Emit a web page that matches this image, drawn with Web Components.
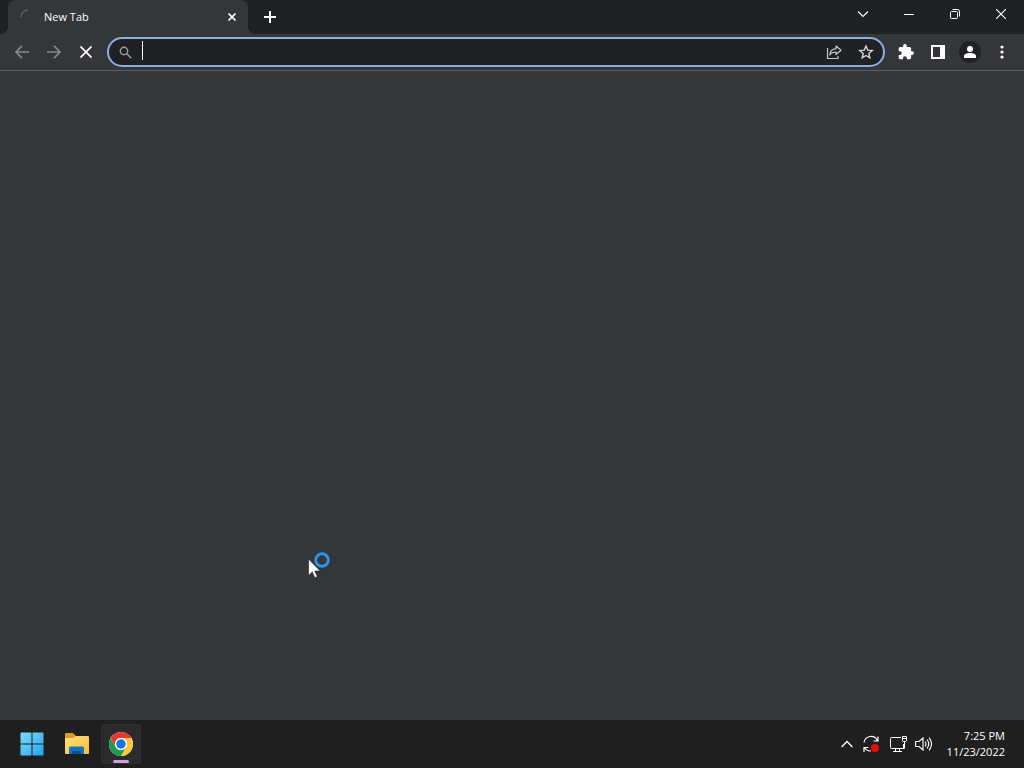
<!DOCTYPE html>
<html lang="en">
<head>
<meta charset="utf-8">
<title>New Tab</title>
<style>
html, body { height: 100%; margin: 0; }
body { background: #35363a; overflow: hidden; font: 11px/16px "Open Sans", "Noto Sans", sans-serif; color: #fff; }
</style>
</head>
<body>
<desktop-screen>
  <browser-window>
    <tab-strip slot="tabs">
      <browser-tab>New Tab</browser-tab>
    </tab-strip>
    <browser-toolbar slot="toolbar"></browser-toolbar>
  </browser-window>
  <task-bar slot="taskbar"></task-bar>
  <busy-pointer slot="pointer"></busy-pointer>
</desktop-screen>

<script>
const base = `
  *, *::before, *::after { box-sizing: border-box; }
  svg { display: block; flex: none; }
  button { all: unset; box-sizing: border-box; display: flex; align-items: center; justify-content: center; flex: none; color: inherit; }
`;

function define(name, html) {
  const template = document.createElement('template');
  template.innerHTML = html;
  customElements.define(name, class extends HTMLElement {
    constructor() {
      super();
      this.attachShadow({ mode: 'open' }).append(template.content.cloneNode(true));
    }
  });
}

define('desktop-screen', `
<style>${base}
  :host { display: flex; flex-direction: column; height: 100vh; position: relative; }
</style>
<slot></slot><slot name="taskbar"></slot><slot name="pointer"></slot>`);

define('browser-window', `
<style>${base}
  :host { display: flex; flex-direction: column; flex: 1; min-height: 0; background: #35363a; }
  main { flex: 1; }
</style>
<slot name="tabs"></slot><slot name="toolbar"></slot><main></main>`);

define('browser-tab', `
<style>${base}
  :host { display: flex; align-items: center; box-sizing: border-box; flex: 0 1 240px; height: 34px; padding: 0 8px 0 12px; gap: 8px;
    background: #35363a; border-radius: 8px 8px 0 0; position: relative; }
  :host::before, :host::after { content: ""; position: absolute; bottom: 0; width: 8px; height: 8px; }
  :host::before { right: 100%; background: radial-gradient(circle at 0 0, transparent 8px, #35363a 8px); }
  :host::after { left: 100%; background: radial-gradient(circle at 100% 0, transparent 8px, #35363a 8px); }
  span { flex: 1; }
  button { width: 16px; height: 34px; }
</style>
<svg width="16" height="16" viewBox="0 0 16 16" fill="none" stroke="#5b6067" stroke-width="1.5"><path d="M1 8a7 7 0 0 1 7-7"/></svg>
<span><slot></slot></span>
<button aria-label="Close tab"><svg width="8" height="8" viewBox="0 0 8 8" stroke="#fff" stroke-width="1.6"><path d="M.5.5l7 7M7.5.5l-7 7"/></svg></button>`);

define('tab-strip', `
<style>${base}
  :host { display: flex; height: 34px; padding-left: 8px; background: #202124; }
  .new { width: 28px; height: 34px; margin-left: 8px; }
  .controls { display: flex; margin-left: auto; }
  .controls button { width: 46px; height: 28px; }
</style>
<slot></slot>
<button class="new" aria-label="New tab"><svg width="12" height="12" viewBox="0 0 12 12" stroke="#fff" stroke-width="2"><path d="M6 0v12M0 6h12"/></svg></button>
<div class="controls">
  <button aria-label="Search tabs"><svg width="12" height="12" viewBox="0 0 12 12" fill="none" stroke="#fff" stroke-width="1.1"><path d="M1 3.5l5 5 5-5"/></svg></button>
  <button aria-label="Minimize"><svg width="10" height="10" viewBox="0 0 10 10"><path d="M0 5h10v1H0z" fill="#fff"/></svg></button>
  <button aria-label="Restore"><svg width="10" height="10" viewBox="0 0 10 10" fill="none" stroke="#fff"><rect x=".5" y="2.5" width="7" height="7" rx="1"/><path d="M2.5.5H7.5a2 2 0 0 1 2 2V7.500"/></svg></button>
  <button aria-label="Close"><svg width="10" height="10" viewBox="0 0 10 10" stroke="#fff" stroke-width="1.1"><path d="M0 0l10 10M10 0L0 10"/></svg></button>
</div>`);

define('browser-toolbar', `
<style>${base}
  :host { display: flex; gap: 5px; height: 36px; padding: 0 6px; align-items: center; border-bottom: 1px solid #5f6164; background: #35363a; }
  nav { display: flex; }
  nav button { width: 32px; height: 32px; }
  address-bar { flex: 1; }
  .avatar { width: 22px; height: 22px; border-radius: 50%; background: #202124; display: flex; align-items: center; justify-content: center; }
</style>
<nav aria-label="Navigation">
  <button aria-label="Back"><svg width="14" height="14" viewBox="0 0 14 14" fill="none" stroke="#85878a" stroke-width="1.7"><path d="M14 7H1.500M7 .8L.9 7 7 13.200"/></svg></button>
  <button aria-label="Forward"><svg width="14" height="14" viewBox="0 0 14 14" fill="none" stroke="#85878a" stroke-width="1.7"><path d="M0 7h12.500M7 .8L13.100 7 7 13.200"/></svg></button>
  <button aria-label="Stop"><svg width="12" height="12" viewBox="0 0 12 12" stroke="#fff" stroke-width="1.7"><path d="M.5.5l11 11M11.500.5l-11 11"/></svg></button>
</nav>
<address-bar></address-bar>
<nav aria-label="Browser">
  <button aria-label="Extensions"><svg width="16" height="16" viewBox="1 1 22 22" fill="#fff"><path d="M20.500 11H19V7c0-1.100-.9-2-2-2h-4V3.500a2.500 2.500 0 0 0-5 0V5H4c-1.100 0-2 .9-2 2v3.800h1.500a2.700 2.700 0 0 1 0 5.400H2V20c0 1.100.9 2 2 2h3.800v-1.500a2.700 2.700 0 0 1 5.400 0V22H17c1.100 0 2-.9 2-2v-4h1.500a2.500 2.500 0 0 0 0-5z"/></svg></button>
  <button aria-label="Side panel"><svg width="14" height="14" viewBox="0 0 14 14"><path fill="#fff" fill-rule="evenodd" d="M0 0h14v14H0zM2 2v10h7V2z"/></svg></button>
  <button aria-label="Profile"><span class="avatar"><svg width="12" height="12" viewBox="0 0 12 12" fill="#fff"><circle cx="6" cy="3" r="3"/><path d="M0 12V10C0 8 3 7 6 7s6 1 6 3v2z"/></svg></span></button>
  <button aria-label="Menu"><svg width="4" height="14" viewBox="0 0 4 14" fill="#fff"><circle cx="2" cy="2" r="1.600"/><circle cx="2" cy="7" r="1.600"/><circle cx="2" cy="12" r="1.600"/></svg></button>
</nav>`);

define('address-bar', `
<style>${base}
  :host { display: flex; align-items: center; box-sizing: border-box; height: 30px; min-width: 0; padding: 0 1px 0 10px; border: 2px solid #8ab0e0; border-radius: 15px; background: #202124; }
  .caret { width: 1px; height: 19px; margin: 0 0 3px 10px; background: #fff; flex: none; }
  input { all: unset; flex: 1; min-width: 0; height: 24px; font-size: 14px; }
  button { width: 32px; height: 26px; }
</style>
<svg width="13" height="13" viewBox="0 0 13 13" fill="none" stroke="#9aa0a6" stroke-width="1.400"><circle cx="5" cy="5" r="3.700"/><path d="M7.800 7.800l4.500 4.500"/></svg>
<span class="caret"></span>
<input type="text" aria-label="Address and search bar">
<button aria-label="Share"><svg width="16" height="16" viewBox="0 0 16 16" fill="none" stroke="#c4c7ca" stroke-width="1.200"><path d="M1.500 4V14.500H12V12"/><path d="M10 2l5 4.200-5 4.300V8C7 8 5 9 3.800 11 4 7.500 6.500 5 10 4.700z" stroke-linejoin="round"/></svg></button>
<button aria-label="Bookmark this tab"><svg width="16" height="16" viewBox="0 0 16 16" fill="none" stroke="#d5d7d9" stroke-width="1.400"><path d="M8 2l1.700 4.100 4.500.4-3.400 2.900 1 4.400L8 11.500l-3.800 2.300 1-4.400-3.400-2.900 4.500-.4z"/></svg></button>`);

define('task-bar', `
<style>${base}
  :host { display: flex; align-items: center; justify-content: space-between; height: 48px; padding: 0 19px 0 11px; background: #1f1f1f; }
  .apps { display: flex; gap: 4px; }
  .apps button { width: 41px; height: 40px; border-radius: 4px; }
  .apps .active { width: 40px; background: #2b2b2b; box-shadow: inset 0 0 0 1px #303030; position: relative; }
  .active::after { content: ""; position: absolute; bottom: 1px; left: 12px; right: 12px; height: 3px; border-radius: 2px; background: #d69add; }
  .tray { display: flex; align-items: center; }
  .tray button { height: 40px; }
  .arrow { width: 22px; }
  .sync { width: 26px; }
  .net { width: 30px; }
  .vol { width: 20px; }
  time { margin-left: 13px; text-align: right; white-space: nowrap; }
</style>
<div class="apps">
  <button aria-label="Start"><svg width="24" height="24" viewBox="0 0 24 24">
    <defs><linearGradient id="w" x2="1" y2="1" gradientUnits="objectBoundingBox"><stop stop-color="#7bddfb"/><stop offset="1" stop-color="#23a5ed"/></linearGradient></defs>
    <path fill="url(#w)" d="M1 .5h10.500v11H.5V1zM12.500.5H23l.5.5v10.500h-11zM.5 12.500h11v11H1l-.5-.5zM12.500 12.500h11V23l-.5.5H12.500z"/></svg></button>
  <button aria-label="File Explorer"><svg width="26" height="24" viewBox="0 0 26 24">
    <defs><linearGradient id="f" x2="1" y2="1"><stop stop-color="#ffe083"/><stop offset="1" stop-color="#f8bd31"/></linearGradient></defs>
    <path fill="#dc9b20" d="M1 2q0-1 1-1h7l3 3v6H1z"/><path fill="url(#f)" d="M1 6h8l3-2h12q1 0 1 1v16q0 1-1 1H2q-1 0-1-1z"/>
    <path fill="#1672bd" d="M5 22v-6q0-1.500 1.500-1.500h12q1.500 0 1.500 1.500v6z"/><path fill="#0d4f94" d="M8 19h9v3H8z"/></svg></button>
  <button class="active" aria-label="Google Chrome"><svg width="24" height="24" viewBox="0 0 48 48">
    <circle cx="24" cy="24" r="24" fill="#fff"/>
    <path fill="#e33b2e" d="M3.220 12A24 24 0 0 1 44.780 12H24a12 12 0 0 0-10.390 18z"/>
    <path fill="#fcc934" d="M44.780 12A24 24 0 0 1 24 48L34.390 30A12 12 0 0 0 24 12z"/>
    <path fill="#219b4b" d="M24 48A24 24 0 0 1 3.220 12L13.610 30A12 12 0 0 0 34.390 30z"/>
    <circle cx="24" cy="24" r="12" fill="#fff"/><circle cx="24" cy="24" r="9.500" fill="#1a73e8"/></svg></button>
</div>
<div class="tray">
  <button class="arrow" aria-label="Show hidden icons"><svg width="12" height="8" viewBox="0 0 12 8" fill="none" stroke="#fff" stroke-width="1.300"><path d="M.6 7L6 1.500 11.400 7"/></svg></button>
  <button class="sync" aria-label="Windows Update"><svg width="18" height="18" viewBox="0 0 18 18" fill="none" stroke="#fff" stroke-width="1.200"><path d="M2 7.500A7 7 0 0 1 15.500 6M16 1.500V6h-4.500M2 17v-4.500h4.500M2.500 12.500A7 7 0 0 0 9 16"/><circle cx="13" cy="13" r="4" fill="#f00b0b" stroke="none"/></svg></button>
  <button class="net" aria-label="Network"><svg width="17" height="17" viewBox="0 0 17 17" fill="none" stroke="#fff"><path d="M11 1.500H1.500q-1 0-1 1v9q0 1 1 1h12V8M5.500 12.500v3M9.500 12.500v3M3 15.500h9M12.500.5h4v4q0 1-1 1h-2q-1 0-1-1zM14.500 5.500v7h-1M12.500 2.500h4"/></svg></button>
  <button class="vol" aria-label="Volume"><svg width="17" height="16" viewBox="0 0 17 16" fill="none" stroke="#fff" stroke-width="1.100"><path d="M.6 5.500H4L8 2v12l-4-3.500H.6zM10 5.500q2 2.500 0 5M12 3.500q3.500 4.500 0 9M14 1.700q5 6.300 0 12.600"/></svg></button>
  <time datetime="2022-11-23T19:25">7:25 PM<br>11/23/2022</time>
</div>`);

define('busy-pointer', `
<style>${base}
  :host { position: absolute; left: 308px; top: 551px; pointer-events: none; }
</style>
<svg width="24" height="28" viewBox="0 0 24 28">
  <circle cx="14" cy="9" r="6.300" fill="none" stroke="#1b5f9c" stroke-width="3.400"/>
  <circle cx="14" cy="9" r="6.300" fill="none" stroke="#3296e6" stroke-width="2.400"/>
  <path fill="#fff" stroke="#222" stroke-width=".6" d="M.5 8v16.500l3.800-3.600 2.500 5.800 2.500-1.100-2.500-5.600h5.400z"/>
</svg>`);
</script>
</body>
</html>
